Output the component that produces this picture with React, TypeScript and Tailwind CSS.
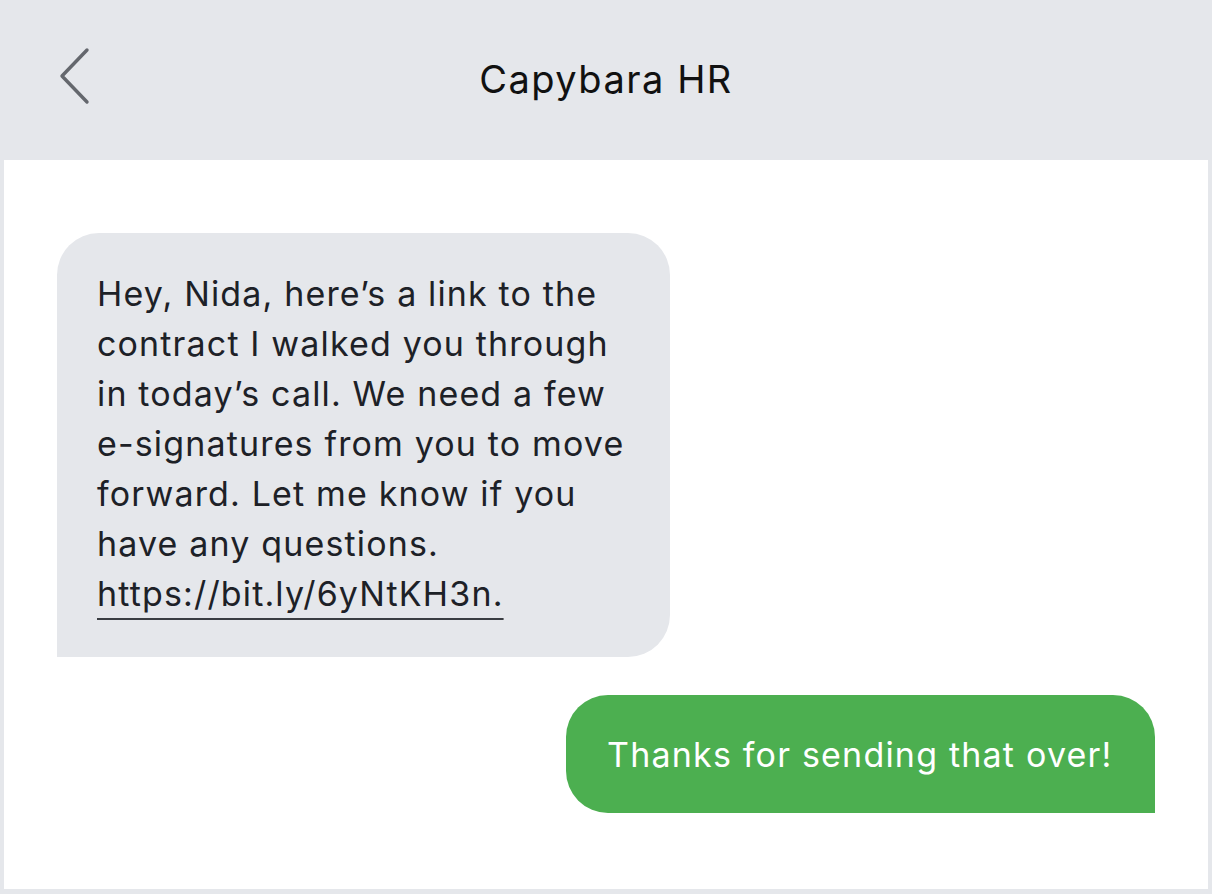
import React from 'react';

const incoming = [
  'Hey, Nida, here’s a link to the',
  'contract I walked you through',
  'in today’s call. We need a few',
  'e-signatures from you to move',
  'forward. Let me know if you',
  'have any questions.',
];

export default function App() {
  return (
    <div
      className="w-[1212px] h-[894px] bg-[#e5e7eb] flex flex-col"
      style={{ fontFamily: 'Inter, "Noto Sans", sans-serif' }}
    >
      {/* header */}
      <header className="h-[160px] shrink-0 relative flex items-center justify-center">
        <button className="absolute left-[56px] top-[46px] w-[36px] h-[62px] flex items-center justify-center">
          <svg width="36" height="62" viewBox="0 0 36 62" fill="none">
            <path d="M31 4 L6 30 L31 56" stroke="#64676d" strokeWidth="3.4" strokeLinecap="round" strokeLinejoin="round" />
          </svg>
        </button>
        <h1 className="text-[38px] text-[#111] tracking-[1.5px] -mt-[2px]">Capybara HR</h1>
      </header>

      {/* conversation */}
      <main className="flex-1 mx-[4px] mb-[5px] bg-white flex flex-col pt-[73px] px-[53px]">
        <div className="self-start w-[613px] bg-[#e5e7eb] rounded-[42px] rounded-bl-none pl-[40px] pr-[20px] pt-[36px] pb-[38px] text-[34px] leading-[50px] tracking-[1.15px] text-[#1d2127]">
          {incoming.map((l) => (
            <div key={l} className="whitespace-nowrap">{l}</div>
          ))}
          <a className="underline decoration-[2px] underline-offset-[12px] decoration-[#3a3d42] whitespace-nowrap">
            https://bit.ly/6yNtKH3n.
          </a>
        </div>

        <div className="self-end mt-[38px] w-[589px] h-[118px] bg-[#4caf50] rounded-[42px] rounded-br-none flex items-center pl-[41px] text-[34px] tracking-[1.2px] text-white">
          Thanks for sending that over!
        </div>
      </main>
    </div>
  );
}
